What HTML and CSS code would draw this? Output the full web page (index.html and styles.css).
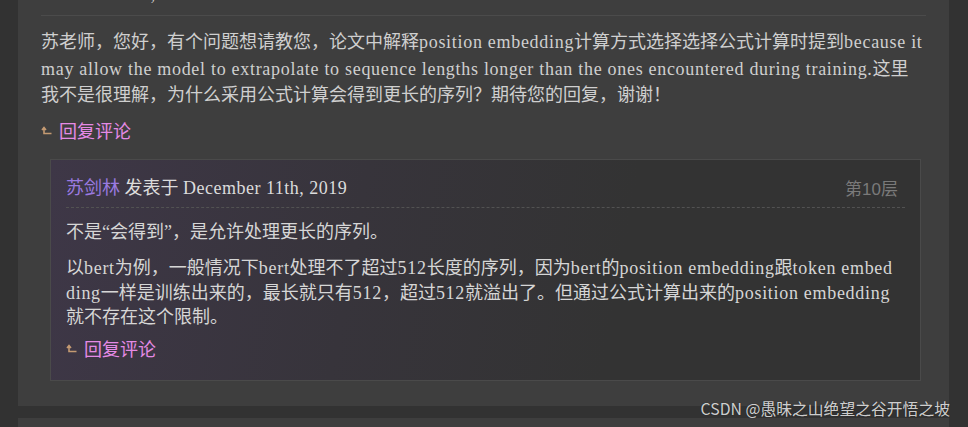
FILE: index.html
```html
<!DOCTYPE html>
<html lang="zh-CN">
<head>
  <meta charset="UTF-8">
  <title>评论</title>
  <meta name="viewport" content="width=device-width,initial-scale=1">
  <link rel="stylesheet" href="styles.css">
</head>
<body>

<div class="comments">
  <div class="comment">
    <div class="comment-head"><span class="en">December 9th, 2019</span></div>
    <p class="comment-text">苏老师，您好，有个问题想请教您，论文中解释<span class="en">position embedding</span>计算方式选择选择公式计算时提到<span class="en">because it</span><br><span class="en">may allow the model to extrapolate to sequence lengths longer than the ones encountered during training.</span>这里<br>我不是很理解，为什么采用公式计算会得到更长的序列？期待您的回复，谢谢！</p>
    <a class="reply" href="#">
      <svg class="reply-icon" width="11" height="9" viewBox="0 0 11 9"><path d="M1 4 3 1.5 5 4M3 2v5.5h7.5" fill="none" stroke="#c49a72" stroke-width="1.6"/></svg>
      回复评论
    </a>

    <div class="sub-comment">
      <div class="sub-head">
        <span><span class="author">苏剑林</span> 发表于 <span class="en">December 11th, 2019</span></span>
        <span class="floor">第10层</span>
      </div>
      <div class="sub-body">
        <p>不是“会得到”，是允许处理更长的序列。</p>
        <p>以<span class="en">bert</span>为例，一般情况下<span class="en">bert</span>处理不了超过<span class="en">512</span>长度的序列，因为<span class="en">bert</span>的<span class="en">position embedding</span>跟<span class="en">token embed</span><br><span class="en">ding</span>一样是训练出来的，最长就只有<span class="en">512</span>，超过<span class="en">512</span>就溢出了。但通过公式计算出来的<span class="en">position embedding</span><br>就不存在这个限制。</p>
      </div>
      <a class="reply" href="#">
        <svg class="reply-icon" width="11" height="9" viewBox="0 0 11 9"><path d="M1 4 3 1.5 5 4M3 2v5.5h7.5" fill="none" stroke="#c49a72" stroke-width="1.6"/></svg>
        回复评论
      </a>
    </div>
  </div>

  <div class="comment next"></div>
</div>

<div class="watermark">CSDN @愚昧之山绝望之谷开悟之坡</div>

</body>
</html>
```

FILE: styles.css
```css
body {
  background: #323232;
  color: #cfcfcf;
  font-family: "Liberation Serif", "Noto Sans CJK SC", serif;
  margin: 0;
  overflow: hidden;
}
.en {
  letter-spacing: 0.7px;
}
.comments {
  margin: -19px 19px 0 18px;
}
.comment {
  background: #3e3e3e;
  padding: 0 23px 25px;
  margin-bottom: 12px;
}
.comment.next {
  height: 60px;
}
.comment-head {
  font-size: 18px;
  line-height: 26px;
  padding-bottom: 8px;
  border-bottom: 1px solid #4b4b4b;
}
.comment-text {
  margin: 13px 0 8px;
  font-size: 18px;
  line-height: 26.5px;
  word-break: break-all;
}
.reply {
  display: flex;
  align-items: center;
  gap: 7px;
  color: #e58ae5;
  text-decoration: none;
  font-size: 18px;
  line-height: 26px;
  font-family: "Noto Sans CJK SC", sans-serif;
}
.reply-icon {
  flex: none;
  margin-top: 2px;
}
.sub-comment {
  margin: 16px 5px 0 9px;
  border: 1px solid #4a4a4a;
  background: linear-gradient(100deg, #3e3747 0%, #37343b 35%, #333 65%);
  padding: 15px 15px 19px;
}
.sub-head {
  display: flex;
  justify-content: space-between;
  align-items: center;
  font-size: 18px;
  line-height: 26px;
  color: #dcdcdc;
  padding-bottom: 6px;
  border-bottom: 1px dashed #525252;
}
.sub-head .en {
  letter-spacing: 0.5px;
}
.author {
  color: #9a7ae0;
}
.floor {
  color: #7a7a7a;
  font: 17px "Liberation Sans", "Noto Sans CJK SC", sans-serif;
  margin-right: 7px;
}
.sub-body {
  font-size: 18px;
  line-height: 24.5px;
  color: #d6d6d6;
  word-break: break-all;
}
.sub-body p {
  margin: 12px 0 10px;
}
.sub-body p:last-child {
  margin-bottom: 5px;
}
.watermark {
  position: absolute;
  right: 18px;
  top: 397px;
  color: rgba(255, 255, 255, 0.8);
  font: 15.8px "Noto Sans CJK SC", sans-serif;
  text-shadow: 0 0 1px rgba(0, 0, 0, 0.6);
}
```
